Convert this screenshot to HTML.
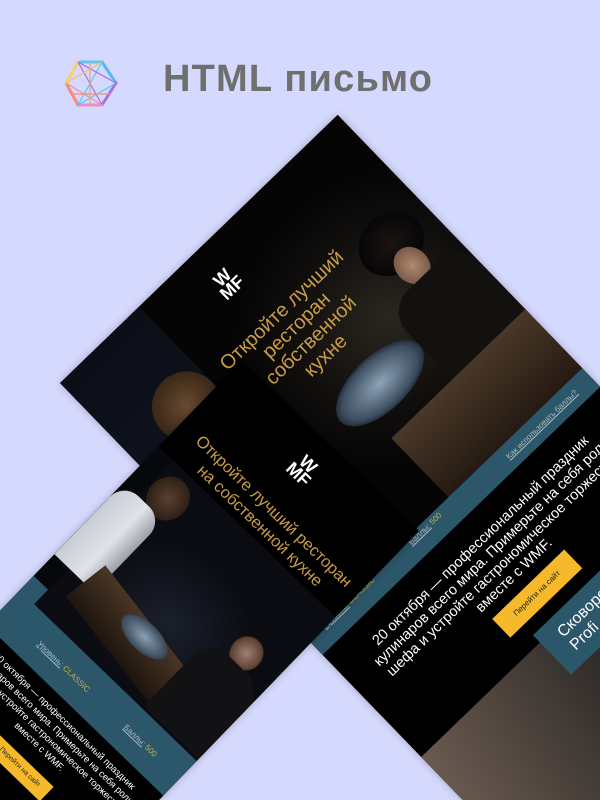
<!DOCTYPE html>
<html><head><meta charset="utf-8">
<style>
*{margin:0;padding:0;box-sizing:border-box}
html,body{width:600px;height:800px;overflow:hidden;background:#d6d9fe}
#wrap{position:relative;width:600px;height:800px;overflow:hidden;background:#d6d9fe;font-family:"Liberation Sans","DejaVu Sans",sans-serif}
.title{position:absolute;left:163px;top:58px;font-size:38px;font-weight:bold;color:#6f6f6f;letter-spacing:1.2px;white-space:nowrap}
.em{position:absolute;transform-origin:0 0;overflow:hidden;box-shadow:0 0 8px rgba(0,0,0,.25)}
.abs{position:absolute}
.gold{color:#c99d45}
.teal{background:#2c5669}
.lbl{font-size:8px;color:#9fb3bf;white-space:nowrap}
.lbl u{color:#a9bcc6}
.lbl b{font-weight:normal;color:#c8b040}
.body{color:#fff;text-align:center;white-space:nowrap}
.btn{background:#f6b92b;color:#222;font-size:8px;text-align:center}
.blob{position:absolute;border-radius:50%}
</style></head><body><div id="wrap">

<svg class="abs" style="left:60px;top:56px" width="62" height="56" viewBox="60 56 62 56">
<g fill="none" stroke-width="3" stroke-linecap="round">
<line x1="78" y1="62" x2="102" y2="62" stroke="#5ac8f0"/>
<line x1="102" y1="62" x2="116" y2="83" stroke="#5ab8f0"/>
<line x1="116" y1="83" x2="102" y2="105" stroke="#a96ee0"/>
<line x1="102" y1="105" x2="78" y2="105" stroke="#ee8ccc"/>
<line x1="78" y1="105" x2="66" y2="83" stroke="#f58c7c"/>
<line x1="66" y1="83" x2="78" y2="62" stroke="#f5d262"/>
</g>
<g fill="none" stroke-width="1.2">
<line x1="78" y1="62" x2="102" y2="105" stroke="#a96ee0"/>
<line x1="102" y1="62" x2="78" y2="105" stroke="#5ac8f0"/>
<line x1="66" y1="83" x2="102" y2="62" stroke="#f5c262"/>
<line x1="78" y1="105" x2="116" y2="83" stroke="#5ac8f0"/>
<line x1="66" y1="83" x2="102" y2="105" stroke="#f58c9c"/>
<line x1="78" y1="62" x2="116" y2="83" stroke="#a96ee0"/>
<line x1="70" y1="94" x2="110" y2="94" stroke="#f58c7c"/>
<line x1="90" y1="62" x2="90" y2="105" stroke="#f5a07c"/>
</g>
</svg>
<div class="title">HTML письмо</div>

<div class="em" style="left:60px;top:383px;width:386px;height:720px;transform:rotate(-44deg);background:#000">
  <div class="abs" style="left:0;top:0;width:386px;height:352px;background:radial-gradient(ellipse 160px 140px at 280px 180px,#2a2620 0%,#110f0d 60%,#050506 100%)"></div>
  <div class="abs" style="left:0;top:0;width:110px;height:352px;background:linear-gradient(#0b0e16,#141a28)"></div>
  <div class="blob" style="left:40px;top:70px;width:70px;height:70px;background:radial-gradient(#6b4a30,#3a2818 70%,transparent 72%)"></div>
  <div class="blob" style="left:300px;top:100px;width:70px;height:60px;background:radial-gradient(#1a1412,#070606 70%,transparent 72%)"></div>
  <div class="blob" style="left:318px;top:140px;width:34px;height:40px;background:radial-gradient(#b08a70,#7a5a48 70%,transparent 72%)"></div>
  <div class="abs" style="left:285px;top:175px;width:101px;height:120px;background:#121110;border-radius:30px 30px 0 0"></div>
  <div class="abs" style="left:200px;top:270px;width:186px;height:82px;background:linear-gradient(#4a3828,#251a12)"></div>
  <div class="blob" style="left:175px;top:195px;width:110px;height:55px;background:radial-gradient(#8fa4b8,#3d4e60 60%,#1a2230 75%,transparent 78%)"></div>
  <div class="abs" style="left:170px;top:30px;width:40px;height:28px;color:#fff;font-weight:bold;font-size:18px;line-height:14px;text-align:center">W<br>MF</div>
  <div class="abs gold" style="left:110px;top:92px;width:200px;font-size:20px;line-height:21px;text-align:center">Откройте лучший<br>ресторан<br>собственной<br>кухне</div>
  <div class="abs teal" style="left:0;top:352px;width:386px;height:26px">
    <div class="abs lbl" style="left:20px;top:2px"><u>Уровень:</u> <b>CLASSIC</b></div>
    <div class="abs lbl" style="left:140px;top:2px"><u>Баллы:</u> <b>500</b></div>
    <div class="abs lbl" style="left:270px;top:8px"><u>Как использовать баллы?</u></div>
  </div>
  <div class="abs body" style="left:0;top:398px;width:386px;font-size:14.5px;line-height:16px">20 октября — профессиональный праздник<br>кулинаров всего мира. Примерьте на себя роль<br>шефа и устройте гастрономическое торжество<br>вместе с WMF.</div>
  <div class="abs btn" style="left:147px;top:470px;width:100px;height:26px;line-height:26px">Перейти на сайт</div>
  <div class="abs" style="left:0;top:520px;width:386px;height:200px;background:linear-gradient(100deg,#6a5a50,#3a3430 40%,#1c1a1a 70%,#2a2622)"></div>
  <div class="abs teal" style="left:165px;top:510px;width:221px;height:55px;color:#fff;font-size:16px;line-height:18px;padding:10px 20px">Сковорода<br>Profi</div>
</div>

<div class="em" style="left:242px;top:360px;width:246px;height:620px;transform:rotate(44deg);background:#000">
  <div class="abs" style="left:0;top:120px;width:246px;height:205px;background:radial-gradient(ellipse 120px 100px at 140px 140px,#1c2230,#0b0e16 70%,#07080c)"></div>
  <div class="abs teal" style="left:0;top:300px;width:246px;height:68px"></div>
  <div class="abs" style="left:20px;top:120px;width:226px;height:200px;background:radial-gradient(ellipse 120px 100px at 110px 120px,#1a1f2a,#0a0c12 75%)"></div>
  <div class="blob" style="left:22px;top:128px;width:42px;height:46px;background:radial-gradient(#5a4030,#2e2016 70%,transparent 72%)"></div>
  <div class="abs" style="left:0;top:170px;width:55px;height:100px;background:linear-gradient(90deg,#c8ccd4,#e0e2e8 60%,#9aa0aa);border-radius:20px 20px 0 0"></div>
  <div class="abs" style="left:40px;top:255px;width:180px;height:50px;background:linear-gradient(#4a3626,#1e150e);transform:rotate(8deg)"></div>
  <div class="blob" style="left:92px;top:252px;width:60px;height:30px;background:radial-gradient(#8ca0b4,#3a4a5a 65%,transparent 70%)"></div>
  <div class="blob" style="left:190px;top:190px;width:34px;height:36px;background:radial-gradient(#a08070,#5a4032 65%,#100c0a 72%,transparent 74%)"></div>
  <div class="abs" style="left:170px;top:222px;width:76px;height:95px;background:#121214;border-radius:26px 26px 0 0"></div>
  <div class="abs" style="left:100px;top:22px;width:40px;height:30px;color:#fff;font-weight:bold;font-size:18px;line-height:14px;text-align:center">W<br>MF</div>
  <div class="abs gold" style="left:0;top:77px;width:256px;font-size:16.5px;line-height:20px;text-align:center;white-space:nowrap">Откройте лучший ресторан<br>на собственной кухне</div>
  <div class="abs lbl" style="left:50px;top:340px"><u>Уровень:</u> <b>CLASSIC</b></div>
  <div class="abs lbl" style="left:170px;top:340px"><u>Баллы:</u> <b>500</b></div>
  <div class="abs body" style="left:0;top:378px;width:246px;font-size:9.5px;line-height:12px">20 октября — профессиональный праздник<br>кулинаров всего мира. Примерьте на себя роль<br>шефа и устройте гастрономическое торжество<br>вместе с WMF.</div>
  <div class="abs btn" style="left:85px;top:438px;width:76px;height:20px;line-height:20px;font-size:7px">Перейти на сайт</div>
</div>

</div></body></html>
